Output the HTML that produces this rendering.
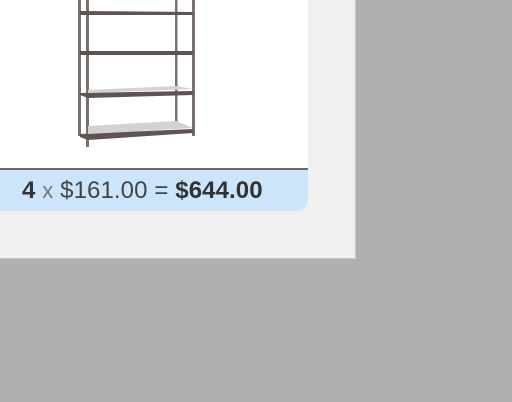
<!DOCTYPE html>
<html><head><style>
html,body{margin:0;padding:0;width:512px;height:402px;background:#b0b0b0;overflow:hidden;font-family:"Liberation Sans",sans-serif}
.panel{position:absolute;left:0;top:0;width:355px;height:258px;background:#f0f0f0;border-right:1px solid #c8c8c8;border-bottom:1px solid #c8c8c8}
.card{position:absolute;left:0;top:0;width:308px;height:211px;background:#fff;border-bottom-right-radius:12px;overflow:hidden}
.bar{position:absolute;left:0;top:168px;width:308px;height:43px;background:#cce5fb;border-top:2px solid #6a6a6a;box-sizing:border-box}
.txt{position:absolute;left:22px;top:176px;font-size:24px;color:#333;white-space:nowrap;line-height:30px;letter-spacing:0.1px}
.txt .x{color:#777;font-size:22px}
.txt .n{color:#444}
</style></head><body>
<div class="panel"></div>
<div class="card">
<svg width="308" height="168" style="position:absolute;left:0;top:0">
<g fill="#7a706c">
<rect x="78" y="0" width="3" height="136"/>
<rect x="86" y="0" width="3" height="147"/>
<rect x="175" y="0" width="2.5" height="128"/>
<rect x="192" y="0" width="3" height="136"/>
</g>
<g fill="#5e5552">
<polygon points="80,11 193,12 193,15 80,15"/>
<polygon points="80,51 193,51 193,55 80,55"/>
<polygon points="80,93 193,91 193,95 88,98 80,95"/>
<polygon points="80,134 193,129 193,133 88,140 80,137"/>
</g>
<g fill="#d2d2d2">
<polygon points="88,90 176,86 193,89 88,93"/>
<polygon points="88,126 176,121 193,128 88,134"/>
</g>
</svg>
<div class="bar"></div>
<div class="txt"><b>4</b> <span class="x">x</span> <span class="n">$161.00 =</span> <b>$644.00</b></div>
</div>
</body></html>
